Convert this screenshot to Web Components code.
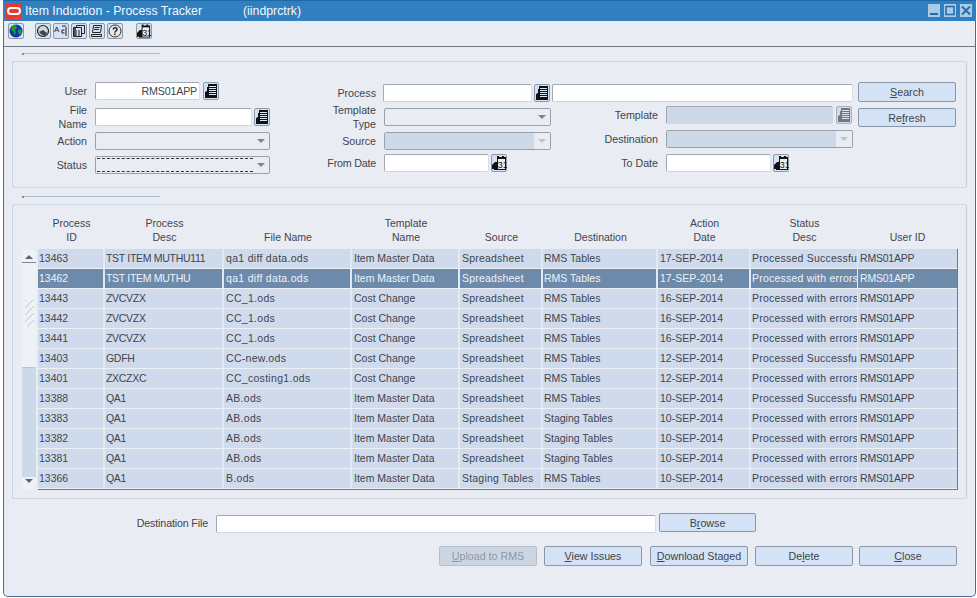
<!DOCTYPE html>
<html>
<head>
<meta charset="utf-8">
<title>Item Induction - Process Tracker</title>
<style>
html, body { margin: 0; padding: 0; background: #fff; }
body { font: 10.7px "Liberation Sans", Arial, sans-serif; color: #3f444e; overflow: hidden; }
</style>
</head>
<body>
<tracker-window title-text="Item Induction - Process Tracker" form-name="(iindprctrk)">
  <tracker-toolbar slot="toolbar"></tracker-toolbar>
  <search-panel slot="search"></search-panel>
  <results-panel slot="results"></results-panel>
  <tracker-footer slot="footer"></tracker-footer>
</tracker-window>
<script>
// small helper, every element below just clones its own template
function tpl(html) {
  let t = document.createElement("template");
  t.innerHTML = html;
  return t;
}

const LOV_ICON = `<svg width="14" height="16" viewBox="0 0 14 16"><path fill="COLOR" d="M4 1h9v14H1V9l2-1V4h1z"/><path stroke="#dbe6f3" stroke-width="1" d="M5 3.500h7M5 5.500h7M5 7.500h7M5 9.500h7M5 11.500h7"/></svg>`;
const CAL_ICON = `<svg width="15" height="15" viewBox="0 0 15 15"><path fill="#111" d="M5 0h2v1h3V0h2v1h2v13H2v-1H0V9l2-2 1-1h2z"/><rect x="6" y="3" width="7" height="10" fill="#e8eef6"/><text x="5.800" y="12" font-family="Liberation Sans" font-size="9" fill="#111">31</text></svg>`;

class IconButton extends HTMLElement {
  static template = tpl(`<style>
    :host { display: inline-flex; align-items: center; justify-content: center; box-sizing: border-box;
      width: 16px; height: 18px; border: 1px solid #8d99aa; border-radius: 2px; background: #d3e3f5; flex: none; }
    :host([disabled]) { background: #d5dbe4; border-color: #a9b2be; }
    span { display: flex; }
  </style><span></span>`);
  connectedCallback() {
    if (this.shadowRoot) return;
    this.attachShadow({mode: "open"}).append(IconButton.template.content.cloneNode(true));
    let kind = this.getAttribute("kind") || "lov";
    this.shadowRoot.querySelector("span").innerHTML =
      kind === "cal" ? CAL_ICON : LOV_ICON.replace("COLOR", this.hasAttribute("disabled") ? "#777" : "#111");
  }
}
customElements.define("icon-button", IconButton);

class FormButton extends HTMLElement {
  static template = tpl(`<style>
    :host { display: inline-flex; box-sizing: border-box; height: 20px; width: 98px; align-items: center; justify-content: center;
      border: 1px solid #8b97a8; border-radius: 2px; background: #d3e3f5; color: #3f444e;
      font: 10.700px "Liberation Sans", Arial, sans-serif; flex: none; white-space: nowrap; }
    :host([disabled]) { background: #ccd6e3; color: #8c96a3; border-color: #b4bdca; }
  </style><slot></slot>`);
  constructor() {
    super();
    this.attachShadow({mode: "open"}).append(FormButton.template.content.cloneNode(true));
  }
}
customElements.define("form-button", FormButton);

class TextField extends HTMLElement {
  static template = tpl(`<style>
    :host { display: flex; box-sizing: border-box; height: 18px; background: #fff; border: 1px solid #a2a9b4;
      border-right-color: #d9dfe8; border-bottom-color: #cdd5e0; border-radius: 2px; flex: none; align-items: center;
      color: #3f444e; justify-content: flex-end; padding: 0 1px; }
    :host([disabled]) { background: #ced9e8; border-color: #a2a9b4 #ced9e8 #ced9e8 #a2a9b4; }
  </style><slot></slot>`);
  constructor() {
    super();
    this.attachShadow({mode: "open"}).append(TextField.template.content.cloneNode(true));
  }
}
customElements.define("text-field", TextField);

class DropList extends HTMLElement {
  static template = tpl(`<style>
    :host { display: flex; box-sizing: border-box; height: 18px; background: #e9edf3; border: 1px solid #9aa1ac;
      border-radius: 2px; flex: none; align-items: stretch; }
    .val { flex: 1; }
    :host([disabled]) .val { background: #ced9e8; }
    :host([focused]) .val { border-top: 1px dashed #333; border-bottom: 1px dashed #333; margin: 1px 0 1px 1px; }
    .arrow { width: 16px; display: flex; align-items: center; justify-content: center; }
    .arrow i { width: 0; height: 0; border: 4px solid transparent; border-top: 4px solid #7b8494; border-bottom: 0; }
    :host([disabled]) .arrow i { border-top-color: #bcc3cd; }
  </style><div class="val"></div><div class="arrow"><i></i></div>`);
  constructor() {
    super();
    this.attachShadow({mode: "open"}).append(DropList.template.content.cloneNode(true));
  }
}
customElements.define("drop-list", DropList);

class FieldLabel extends HTMLElement {
  static template = tpl(`<style>
    :host { display: block; text-align: right; font: 10.700px/14px "Liberation Sans", Arial, sans-serif; color: #3f444e;
      flex: none; margin-right: 6px; white-space: nowrap; }
  </style><slot></slot>`);
  constructor() {
    super();
    this.attachShadow({mode: "open"}).append(FieldLabel.template.content.cloneNode(true));
  }
}
customElements.define("field-label", FieldLabel);

// group frame with the short rule above it
class GroupBox extends HTMLElement {
  static template = tpl(`<style>
    :host { display: block; }
    .rule { height: 1px; width: 138px; margin-left: 10px; background: #b0bccb; position: relative; }
    .rule::before { content: ""; position: absolute; left: 0; top: 0; width: 2px; height: 2px; background: #7f8b9b; }
    .box { margin-top: 7px; border: 1px solid #ccd5e1; border-right-color: #c3ccd8; border-radius: 2px; }
  </style><div class="rule"></div><div class="box"><slot></slot></div>`);
  constructor() {
    super();
    this.attachShadow({mode: "open"}).append(GroupBox.template.content.cloneNode(true));
  }
}
customElements.define("group-box", GroupBox);

class TrackerWindow extends HTMLElement {
  static template = tpl(`<style>
    :host { display: block; box-sizing: border-box; width: 977px; height: 598px; padding: 0 1px 0 3px; }
    .frame { height: 597px; box-sizing: border-box; background: #e9edf3; border: 1px solid #4a6a9c; border-top: 0;
      border-radius: 0 0 5px 5px; display: flex; flex-direction: column; }
    .title { height: 21px; background: #2f7fc1; color: #f4f8fc; display: flex; align-items: center; flex: none;
      margin: 0 -1px; font: 12.300px "Liberation Sans", Arial, sans-serif; padding-left: 3px; box-shadow: inset 0 1px 0 #2069a8; }
    .logo { width: 16px; height: 16px; background: #e8392f; display: flex; align-items: center; justify-content: center; flex: none; }
    .logo i { width: 14px; height: 8px; border: 2px solid #fff; border-radius: 5px; box-sizing: border-box; display: block; }
    .name { margin-left: 3px; width: 218px; white-space: nowrap; }
    .controls { margin-left: auto; display: flex; gap: 4px; padding-right: 4px; }
    .controls b { width: 12px; height: 13px; background: #a9cbe8; display: flex; align-items: center; justify-content: center; }
    .tb { height: 25px; flex: none; border-bottom: 1px solid #6e7887; }
    .body { padding: 6px 8px 0 8px; }
    .sp { height: 8px; }
  </style>
  <div class="frame">
    <div class="title"><div class="logo"><i></i></div><span class="name"></span><span class="form"></span>
      <div class="controls">
        <b><svg width="10" height="11"><path d="M1 9h8" stroke="#2469a8" stroke-width="2"/></svg></b>
        <b><svg width="10" height="11"><rect x="1" y="1.500" width="8" height="8" fill="none" stroke="#2469a8" stroke-width="1.500"/></svg></b>
        <b><svg width="10" height="11"><path d="M1 1.500l8 8M9 1.500l-8 8" stroke="#2469a8" stroke-width="1.800"/></svg></b>
      </div>
    </div>
    <div class="tb"><slot name="toolbar"></slot></div>
    <div class="body">
      <slot name="search"></slot>
      <div class="sp"></div>
      <slot name="results"></slot>
      <slot name="footer"></slot>
    </div>
  </div>`);
  constructor() {
    super();
    this.attachShadow({mode: "open"}).append(TrackerWindow.template.content.cloneNode(true));
    this.shadowRoot.querySelector(".name").textContent = this.getAttribute("title-text");
    this.shadowRoot.querySelector(".form").textContent = this.getAttribute("form-name");
  }
}
customElements.define("tracker-window", TrackerWindow);

class TrackerToolbar extends HTMLElement {
  static template = tpl(`<style>
    :host { display: flex; align-items: flex-start; height: 25px; padding: 2px 0 0 4px; box-sizing: border-box; }
    .b { width: 16px; height: 16px; box-sizing: border-box; border: 1px solid #8d99aa; border-radius: 2px; background: #d3e3f5;
      display: flex; align-items: center; justify-content: center; flex: none; margin-right: 2px; }
    .gap1 { margin-left: 9px; }
    .gap2 { margin-left: 11px; }
  </style>
  <div class="b"><svg width="14" height="14" viewBox="0 0 14 14"><circle cx="7" cy="7" r="6.500" fill="#1230b8"/><path fill="#1f9d2c" d="M3 2l4-1 1 3-2 2 1 3-2 2-1-4-2-1zM9 6l3-1 1 3-2 3-2-2z"/></svg></div>
  <div class="b gap1"><svg width="14" height="14" viewBox="0 0 14 14"><circle cx="7" cy="7" r="5.500" fill="#cfd6de" stroke="#222" stroke-width="1.200"/><path fill="#444" d="M7 6l4 3-2 3-3-1-3-3z"/></svg></div>
  <div class="b"><svg width="14" height="14" viewBox="0 0 14 14"><text x="0" y="8" font-family="Liberation Sans" font-size="8" fill="#222">A</text><path d="M8 2h4M12 3v9M8 6h2.500M8 9h2.500M8 6v3" stroke="#222" fill="none"/></svg></div>
  <div class="b"><svg width="14" height="14" viewBox="0 0 14 14"><path d="M1.500 3.500h8v9h-8zM4.500 3V1.500h8v8H10M4 6v6M7 6v6" fill="none" stroke="#222"/><path d="M2 4h2v8H2z" fill="#555"/></svg></div>
  <div class="b"><svg width="14" height="14" viewBox="0 0 14 14"><path d="M3.500 1.500h8l-1 7h-8zM4.500 3.500h5M4 5.500h5M1.500 10.500h10v2h-10z" fill="none" stroke="#222"/></svg></div>
  <div class="b"><svg width="14" height="14" viewBox="0 0 14 14"><circle cx="7" cy="7" r="6" fill="#e6ebf1" stroke="#333"/><text x="4" y="11" font-family="Liberation Sans" font-size="10" font-weight="700" fill="#111">?</text></svg></div>
  <div class="b gap2" id="cal"></div>`);
  constructor() {
    super();
    this.attachShadow({mode: "open"}).append(TrackerToolbar.template.content.cloneNode(true));
    this.shadowRoot.querySelector("#cal").innerHTML = CAL_ICON;
  }
}
customElements.define("tracker-toolbar", TrackerToolbar);

class SearchPanel extends HTMLElement {
  static template = tpl(`<style>
    :host { display: block; }
    .form { height: 125px; display: flex; }
    .col { display: flex; flex-direction: column; flex: none; box-sizing: border-box; }
    .row { display: flex; align-items: center; gap: 2px; flex: none; height: 18px; }
    .c1 { width: 287px; padding-top: 20px; }
    .c2 { width: 252px; padding-top: 22px; }
    .c3 { width: 301px; padding-top: 22px; }
    .c1 field-label { width: 74px; }
    .c2 field-label { width: 76px; }
    .c3 field-label { width: 106px; }
    .btns { margin-left: 5px; padding-top: 20px; gap: 6px; }
  </style>
  <group-box><div class="form">
    <div class="col c1">
      <div class="row"><field-label>User</field-label><text-field style="width:105px;padding-right:2px;letter-spacing:-.2px">RMS01APP</text-field><icon-button style="margin-left:1px"></icon-button></div>
      <div class="row" style="margin-top:8px"><field-label>File<br>Name</field-label><text-field style="width:157px"></text-field><icon-button></icon-button></div>
      <div class="row" style="margin-top:6px"><field-label>Action</field-label><drop-list style="width:175px"></drop-list></div>
      <div class="row" style="margin-top:6px"><field-label>Status</field-label><drop-list focused style="width:175px"></drop-list></div>
    </div>
    <div class="col c2">
      <div class="row"><field-label style="margin-right:5px">Process</field-label><text-field style="width:149px"></text-field><icon-button></icon-button></div>
      <div class="row" style="margin-top:6px"><field-label>Template<br>Type</field-label><drop-list style="width:167px"></drop-list></div>
      <div class="row" style="margin-top:6px"><field-label>Source</field-label><drop-list disabled style="width:167px"></drop-list></div>
      <div class="row" style="margin-top:4px"><field-label style="letter-spacing:-.2px">From Date</field-label><text-field style="width:105px"></text-field><icon-button kind="cal"></icon-button></div>
    </div>
    <div class="col c3">
      <div class="row"><text-field style="width:301px"></text-field></div>
      <div class="row" style="margin-top:4px"><field-label>Template</field-label><text-field disabled style="width:167px"></text-field><icon-button disabled style="margin-left:1px"></icon-button></div>
      <div class="row" style="margin-top:6px"><field-label>Destination</field-label><drop-list disabled style="width:187px"></drop-list></div>
      <div class="row" style="margin-top:6px"><field-label>To Date</field-label><text-field style="width:105px"></text-field><icon-button kind="cal"></icon-button></div>
    </div>
    <div class="col btns"><form-button><span><u>S</u>earch</span></form-button><form-button style="height:19px"><span>Re<u>f</u>resh</span></form-button></div>
  </div></group-box>`);
  constructor() {
    super();
    this.attachShadow({mode: "open"}).append(SearchPanel.template.content.cloneNode(true));
  }
}
customElements.define("search-panel", SearchPanel);

const COLUMNS = [
  {w: 67, head: "Process<br>ID"},
  {w: 119, head: "Process<br>Desc"},
  {w: 128, head: "File Name"},
  {w: 108, head: "Template<br>Name"},
  {w: 83, head: "Source"},
  {w: 115, head: "Destination"},
  {w: 93, head: "Action<br>Date"},
  {w: 107, head: "Status<br>Desc"},
  {w: 99, head: "User ID"}
];
const OK = "Processed Successfully";
const ERR = "Processed with errors";
const ROWS = [
  ["13463","TST ITEM MUTHU111","qa1 diff data.ods","Item Master Data","Spreadsheet","RMS Tables","17-SEP-2014",OK,"RMS01APP"],
  ["13462","TST ITEM MUTHU","qa1 diff data.ods","Item Master Data","Spreadsheet","RMS Tables","17-SEP-2014",ERR,"RMS01APP"],
  ["13443","ZVCVZX","CC_1.ods","Cost Change","Spreadsheet","RMS Tables","16-SEP-2014",ERR,"RMS01APP"],
  ["13442","ZVCVZX","CC_1.ods","Cost Change","Spreadsheet","RMS Tables","16-SEP-2014",ERR,"RMS01APP"],
  ["13441","ZVCVZX","CC_1.ods","Cost Change","Spreadsheet","RMS Tables","16-SEP-2014",ERR,"RMS01APP"],
  ["13403","GDFH","CC-new.ods","Cost Change","Spreadsheet","RMS Tables","12-SEP-2014",OK,"RMS01APP"],
  ["13401","ZXCZXC","CC_costing1.ods","Cost Change","Spreadsheet","RMS Tables","12-SEP-2014",ERR,"RMS01APP"],
  ["13388","QA1","AB.ods","Item Master Data","Spreadsheet","RMS Tables","10-SEP-2014",OK,"RMS01APP"],
  ["13383","QA1","AB.ods","Item Master Data","Spreadsheet","Staging Tables","10-SEP-2014",ERR,"RMS01APP"],
  ["13382","QA1","AB.ods","Item Master Data","Spreadsheet","Staging Tables","10-SEP-2014",ERR,"RMS01APP"],
  ["13381","QA1","AB.ods","Item Master Data","Spreadsheet","Staging Tables","10-SEP-2014",ERR,"RMS01APP"],
  ["13366","QA1","B.ods","Item Master Data","Staging Tables","RMS Tables","10-SEP-2014",ERR,"RMS01APP"]
];

class ResultsPanel extends HTMLElement {
  constructor() {
    super();
    let cols = COLUMNS.map(c => c.w + "px").join(" ");
    let head = COLUMNS.map(c => `<div class="h">${c.head}</div>`).join("");
    let rows = ROWS.map((r, i) =>
      `<div class="r${i === 1 ? " sel" : ""}">${r.map(v => `<div class="c">${v}</div>`).join("")}</div>`).join("");
    this.attachShadow({mode: "open"}).innerHTML = `<style>
      :host { display: block; }
      .inner { height: 293px; box-sizing: border-box; padding: 11px 0 0 9px; font: 10.500px/14px "Liberation Sans", Arial, sans-serif; color: #3f444e; }
      .head { display: grid; grid-template-columns: ${cols}; margin-left: 16px; height: 28px; align-items: end; }
      .h { text-align: center; }
      .wrap { display: flex; margin-top: 5px; }
      .bar { width: 14px; flex: none; height: 241px; margin-right: 2px; border-radius: 6px;
        background: linear-gradient(#eef1f6 0 118px, #b9c6d8 118px 119px, #ccd9ea 119px 228px, #eef1f6 228px);
        display: flex; flex-direction: column; justify-content: space-between; align-items: center; position: relative; }
      .grip { position: absolute; top: 51px; left: 3px; width: 9px; height: 27px; background: repeating-linear-gradient(135deg, #bfc7d2 0 1px, transparent 1px 5px); }
      .up { width: 0; height: 0; border: 4px solid transparent; border-bottom: 4px solid #5a6676; border-top: 0; margin-top: 6px; }
      .up-line { position: absolute; top: 13px; left: 0; right: 0; height: 1px; background: #7f8b9b; }
      .down { width: 0; height: 0; border: 4px solid transparent; border-top: 4px solid #5a6676; border-bottom: 0; margin-bottom: 7px; }
      .tbl { width: 920px; box-sizing: border-box; border-right: 1px solid #6f7a89; border-bottom: 1px solid #6f7a89; height: 241px; }
      .r { display: grid; grid-template-columns: ${cols}; height: 20px; box-sizing: border-box; background: #cfdbec; border-bottom: 1px solid #eef2f7; }
      .c { box-sizing: border-box; padding: 2px 0 0 1px; white-space: nowrap; overflow: hidden; border-right: 2px solid #e3e9f3; line-height: 14px; }
      .c:nth-child(3), .c:nth-child(4), .c:nth-child(5), .c:nth-child(7) { padding-left: 2px; }
      .c:nth-child(2) { letter-spacing: -.3px; }
      .c:nth-child(3) { letter-spacing: .3px; }
      .c:nth-child(5) { letter-spacing: .2px; }
      .c:nth-child(8) { letter-spacing: .22px; border-right-width: 1px; }
      .c:last-child { border-right: 0; padding-left: 2px; letter-spacing: -.2px; }
      .sel { background: #6d8aab; color: #eef3f8; }
    </style>
    <group-box><div class="inner">
      <div class="head">${head}</div>
      <div class="wrap">
        <div class="bar"><div class="up"></div><div class="up-line"></div><div class="grip"></div><div class="down"></div></div>
        <div class="tbl">${rows}</div>
      </div>
    </div></group-box>`;
  }
}
customElements.define("results-panel", ResultsPanel);

class TrackerFooter extends HTMLElement {
  static template = tpl(`<style>
    :host { display: block; padding-top: 14px; }
    .line { display: flex; align-items: flex-end; height: 20px; }
    .lab { width: 196px; text-align: right; margin-right: 8px; line-height: 16px; padding-bottom: 2px; flex: none; letter-spacing: -.15px; }
    .actions { display: flex; margin-top: 13px; padding-left: 427px; }
  </style>
  <div class="line"><span class="lab">Destination File</span>
    <text-field style="width:440px"></text-field>
    <form-button style="margin-left:3px;width:97px;align-self:flex-start;height:19px"><span>B<u>r</u>owse</span></form-button></div>
  <div class="actions">
    <form-button disabled><span><u>U</u>pload to RMS</span></form-button>
    <form-button style="margin-left:7px"><span><u>V</u>iew Issues</span></form-button>
    <form-button style="margin-left:8px"><span><u>D</u>ownload Staged</span></form-button>
    <form-button style="margin-left:7px"><span>De<u>l</u>ete</span></form-button>
    <form-button style="margin-left:6px"><span><u>C</u>lose</span></form-button>
  </div>`);
  constructor() {
    super();
    this.attachShadow({mode: "open"}).append(TrackerFooter.template.content.cloneNode(true));
  }
}
customElements.define("tracker-footer", TrackerFooter);
</script>
</body>
</html>
